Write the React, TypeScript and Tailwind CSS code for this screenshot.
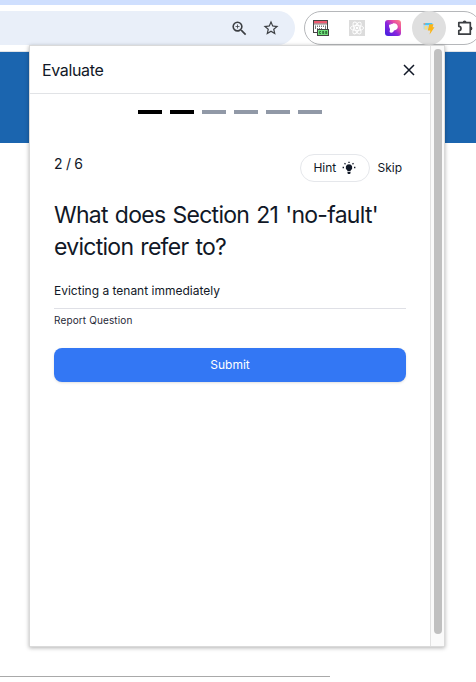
import React from "react";
import { MdStarBorder, MdZoomIn } from "react-icons/md";

const TOTAL = 6;
const CURRENT = 2;

const CssIcon: React.FC = () => (
  <svg width="16" height="16" viewBox="0 0 16 16">
    <rect x="0.5" y="0.5" width="14" height="12" fill="#fff" stroke="#444" />
    <rect x="1" y="1" width="13" height="2.5" fill="#ee5a70" />
    <path d="M1 4h13" stroke="#555" strokeWidth="0.8" />
    <path
      d="M2.5 5.5v3.5M4.5 5.5v1.5M4.5 8v1M6.5 5.5v1.5M6.5 8v1M8.5 5.5v1.5M8.5 8v1M10.5 5.5v1.5M12.5 5.5v3.5"
      stroke="#777"
    />
    <rect x="4.5" y="9.5" width="11" height="6" fill="#72e07d" stroke="#444" />
    <path
      d="M8 11.5H6.6v2H8M11 11.5H9.5v1h1.3v1H9.3M14 11.5h-1.5v1h1.3v1h-1.5"
      fill="none"
      stroke="#1f5a28"
      strokeWidth="0.8"
    />
  </svg>
);

const ReactIcon: React.FC = () => (
  <svg width="16" height="16" viewBox="0 0 16 16">
    <rect width="16" height="16" fill="#dcdcdc" />
    <g fill="none" stroke="#fff" strokeWidth="0.9">
      <ellipse cx="8" cy="8" rx="6.6" ry="2.6" />
      <ellipse cx="8" cy="8" rx="6.6" ry="2.6" transform="rotate(60 8 8)" />
      <ellipse cx="8" cy="8" rx="6.6" ry="2.6" transform="rotate(120 8 8)" />
    </g>
    <circle cx="8" cy="8" r="1.3" fill="#fff" />
  </svg>
);

const PurpleIcon: React.FC = () => (
  <svg width="16" height="16" viewBox="0 0 16 16">
    <defs>
      <linearGradient id="purple" x1="0" y1="1" x2="1" y2="0">
        <stop offset="0" stopColor="#3b1fe0" />
        <stop offset="0.45" stopColor="#8a25dd" />
        <stop offset="0.7" stopColor="#e64aa6" />
        <stop offset="1" stopColor="#ff8a80" />
      </linearGradient>
    </defs>
    <rect width="16" height="16" rx="3" fill="url(#purple)" />
    <path
      d="M4.3 4.5 5.3 5.1 5.8 3.5 6.9 4.2 8.2 3.2c2.7-.3 4.6 1.3 4.6 3.6 0 2.2-1.6 3.5-3.8 3.7-.6 1.5-1.5 2.2-2.8 2.2-1.4 0-1.9-1-1.4-2.2.4-1 .2-1.7-.2-2.6C4 6.700 3.900 5.500 4.300 4.500z"
      fill="#fff"
    />
  </svg>
);

const BoltIcon: React.FC = () => (
  <svg width="12" height="13" viewBox="0 0 12 13">
    <rect x="0.5" y="1" width="9" height="6.5" rx="1" fill="#a9d9f7" />
    <rect x="0.5" y="1" width="9" height="2" rx="1" fill="#4fc3ee" />
    <circle cx="1.5" cy="1.8" r="0.9" fill="#ef9a75" />
    <path d="M1.5 4h3v3.5h-3z" fill="#f7dc84" />
    <path d="M6.3 2.2h4.2L9.6 5.3h1.9L6.6 12.5l.8-4H4.8z" fill="#fbb416" />
  </svg>
);

const PuzzleIcon: React.FC = () => (
  <svg width="17" height="17" viewBox="0 0 17 17" fill="none">
    <path
      d="M1.8 3.7h11.5v11.5H1.8v-3.5a2.2 2.2 0 0 0 0-4.4z"
      stroke="#3c3f43"
      strokeWidth="1.7"
      strokeLinejoin="round"
    />
    <path d="M5.7 3.5a1.9 1.9 0 0 1 3.8 0zM13.5 7.5a1.9 1.9 0 0 1 0 3.8z" fill="#3c3f43" />
  </svg>
);

const BulbIcon: React.FC = () => (
  <svg width="14" height="14" viewBox="0 0 14 14" fill="#111827">
    <path d="M7 3.2a3.3 3.3 0 0 0-1.7 6.1v.9h3.4v-.9A3.3 3.3 0 0 0 7 3.2zM5.5 10.9h3v1a1 1 0 0 1-1 1h-1a1 1 0 0 1-1-1z" />
    <path
      d="M7 .8v1.3M2.5 2.3l1 1M11.5 2.3l-1 1M.6 6.5H2M12 6.5h1.4"
      stroke="#111827"
      strokeWidth="1.3"
    />
  </svg>
);

const CloseIcon: React.FC = () => (
  <svg width="12" height="12" viewBox="0 0 12 12" stroke="#111827" strokeWidth="1.5">
    <path d="M1 1l10 10M11 1L1 11" />
  </svg>
);

const Toolbar: React.FC = () => (
  <div className="h-[52px] border-t-[5px] border-t-[#cfdffe] border-b border-b-[#e1e3e6] pt-1.5 flex">
    <div className="h-[34px] w-[295px] shrink-0 rounded-r-full bg-[#e9eff9] flex items-center justify-end pr-[15px] gap-[13px] text-[#3c3f43]">
      <MdZoomIn size={19} />
      <MdStarBorder size={18} />
    </div>
    <div className="ml-[9px] h-[34px] w-[177px] shrink-0 rounded-full border border-[#b5b7ba] flex items-center pl-2">
      <CssIcon />
      <div className="ml-5">
        <ReactIcon />
      </div>
      <div className="ml-5">
        <PurpleIcon />
      </div>
      <div className="ml-[11px] size-[34px] shrink-0 rounded-full bg-[#dfdfdf] flex items-center justify-center">
        <BoltIcon />
      </div>
      <div className="ml-[11px] mb-[2px] shrink-0">
        <PuzzleIcon />
      </div>
    </div>
  </div>
);

const Popup: React.FC = () => (
  <div className="absolute left-[29px] top-[45px] h-[602px] w-[416px] flex border border-[#dadada] bg-white shadow-[0_1px_4px_rgba(0,0,0,0.3)]">
    <div className="w-[400px] shrink-0">
      <div className="h-12 pl-3 pr-[15px] flex items-center justify-between border-b border-[#e1e3e6]">
        <h1 className="text-base tracking-[-0.35px]">Evaluate</h1>
        <button>
          <CloseIcon />
        </button>
      </div>

      <div className="mt-4 flex justify-center gap-2">
        {Array.from({ length: TOTAL }, (_, i) => (
          <div key={i} className={i < CURRENT ? "h-1 w-6 bg-black" : "h-1 w-6 bg-[#9199a7]"} />
        ))}
      </div>

      <div className="px-6 pt-10">
        <div className="h-7 flex justify-between">
          <span className="text-sm tracking-[-0.3px]">
            {CURRENT} / {TOTAL}
          </span>
          <div className="flex items-center text-xs">
            <button className="h-7 w-[70px] pl-3 flex items-center gap-[6px] rounded-full border border-[#e5e7eb]">
              Hint
              <BulbIcon />
            </button>
            <button className="ml-[7px] mr-1">Skip</button>
          </div>
        </div>

        <h2 className="mt-[17px] text-[23px] leading-8 tracking-[-0.72px] [word-spacing:1.3px]">
          What does Section 21 'no-fault' eviction refer to?
        </h2>

        <div className="mt-[18px] h-[28px] text-xs leading-5 border-b border-[#dfe0e6]">
          Evicting a tenant immediately
        </div>
        <button className="mt-[3px] block text-[10px] leading-4 tracking-[0.13px] text-[#1f2937]">
          Report Question
        </button>

        <button className="mt-5 h-[34px] w-full rounded-lg bg-[#3377f4] text-xs text-white shadow-sm">
          Submit
        </button>
      </div>
    </div>

    <div className="w-[14px] shrink-0 pt-[3px] pl-[3px] border-l border-[#e2e2e2] bg-[#fafafa]">
      <div className="h-[585px] w-2 rounded-full bg-[#c0c0c0]" />
    </div>
  </div>
);

const App: React.FC = () => {
  return (
    <div className="relative h-[682px] w-[476px] overflow-hidden bg-white font-['Inter',sans-serif] text-[#111827]">
      <Toolbar />
      <div className="h-[91px] bg-[#1b65af]" />
      <div className="mt-[533px] h-px w-[330px] bg-[#a9a9a9]" />
      <Popup />
    </div>
  );
};

export default App;
